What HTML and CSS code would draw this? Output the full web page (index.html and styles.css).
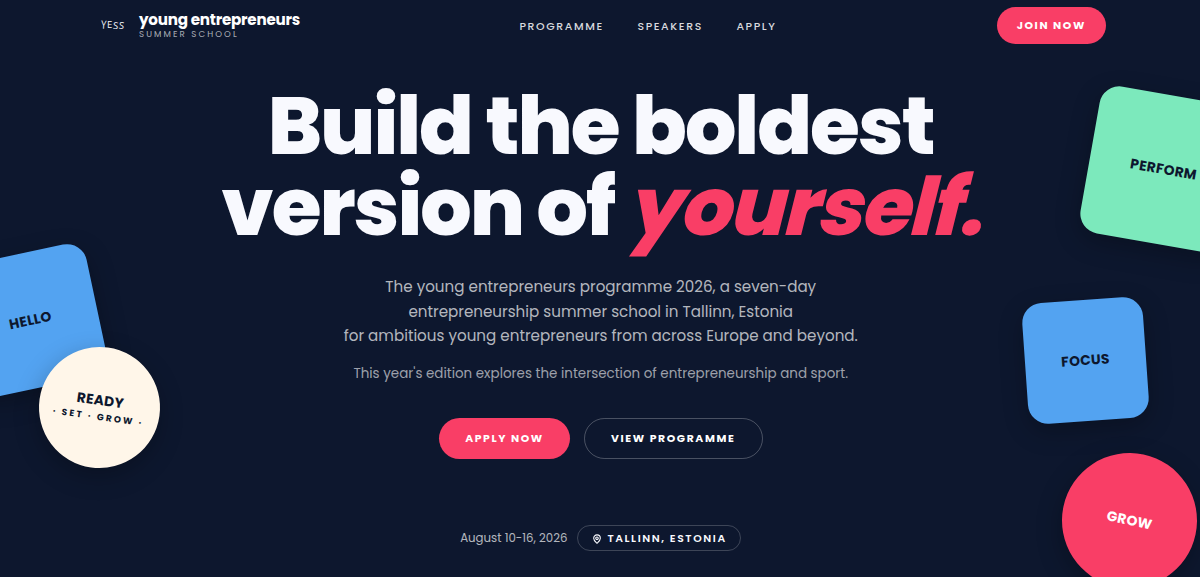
FILE: index.html
```
<!DOCTYPE html>
<html lang="en">
<head>
<meta charset="utf-8">
<title>Young Entrepreneurs Summer School</title>
<link rel="stylesheet" href="styles.css">
</head>
<body>
<header class="header">
  <a class="brand">
    <span class="mark"><i>Y</i><i>E</i><i>S</i><i>S</i></span>
    <span class="brand-text">
      <span class="brand-name">young entrepreneurs</span>
      <span class="brand-sub">SUMMER SCHOOL</span>
    </span>
  </a>
  <nav class="nav"><a>PROGRAMME</a><a>SPEAKERS</a><a>APPLY</a></nav>
  <a class="btn btn-join">JOIN NOW</a>
</header>
<main class="hero">
  <h1 class="title">Build the boldest<br>version of <em>yourself.</em></h1>
  <p class="lead">The young entrepreneurs programme 2026, a seven-day<br>entrepreneurship summer school in Tallinn, Estonia<br>for ambitious young entrepreneurs from across Europe and beyond.</p>
  <p class="note">This year's edition explores the intersection of entrepreneurship and sport.</p>
  <div class="actions">
    <a class="btn btn-primary">APPLY NOW</a>
    <a class="btn btn-outline">VIEW PROGRAMME</a>
  </div>
  <div class="meta">
    <span>August 10-16, 2026</span>
    <span class="place">
      <svg class="pin" viewBox="0 0 24 24" fill="none" stroke="currentColor" stroke-width="2.6" stroke-linecap="round" stroke-linejoin="round"><path d="M20 10c0 5-5.500 10.200-7.400 11.800a1 1 0 0 1-1.200 0C9.500 20.200 4 15 4 10a8 8 0 0 1 16 0"/><circle cx="12" cy="10" r="3"/></svg>
      TALLINN, ESTONIA
    </span>
  </div>
</main>
<div class="sticker hello">HELLO</div>
<div class="sticker ready">READY<small>· SET · GROW ·</small></div>
<div class="sticker perform">PERFORM</div>
<div class="sticker focus">FOCUS</div>
<div class="sticker grow">GROW</div>
</body>
</html>
```
FILE: styles.css
```
* { box-sizing: border-box; }
body {
  margin: 0;
  position: relative;
  height: 577px;
  overflow: hidden;
  background: #0d172e;
  color: #f8f9fe;
  font-family: Poppins, Inter, "Open Sans", sans-serif;
}
.header {
  display: grid;
  grid-template-columns: 418.500px auto 1fr;
  align-items: center;
  height: 50px;
  padding: 0 94px 0 101px;
}
.brand { display: flex; align-items: center; gap: 15px; }
.mark {
  display: flex;
  justify-content: space-between;
  width: 23px;
  font: 500 9.5px/12px "Open Sans", sans-serif;
}
.mark i { font-style: normal; }
.mark i:nth-child(1) { transform: rotate(4deg) scaleY(1.2); }
.mark i:nth-child(3) { transform: translateY(1px) rotate(6deg); }
.mark i:nth-child(4) { transform: translateY(1px) rotate(8deg); }
.brand-text { display: flex; flex-direction: column; padding-top: 1px; }
.brand-name { font-size: 15.15px; line-height: 17px; font-weight: 700; letter-spacing: -0.23px; color: #fff; }
.brand-sub { font-size: 8.6px; line-height: 13px; letter-spacing: 2.1px; color: rgba(255,255,255,.65); }
.nav { display: flex; gap: 33.500px; padding-top: 3px; font-size: 10.94px; font-weight: 500; letter-spacing: 1.6px; color: rgba(255,255,255,.85); }
.btn {
  display: inline-flex;
  align-items: center;
  justify-content: center;
  border-radius: 30px;
  color: #fff;
  font-size: 10.8px;
  font-weight: 700;
  letter-spacing: 1.62px;
  padding-top: 1px;
}
.btn-join { justify-self: end; width: 109.500px; height: 37px; background: #f93e66; }
.hero { display: flex; flex-direction: column; align-items: center; padding: 35px 0 0 1.500px; }
.title {
  margin: 0;
  font-size: 80.8px;
  line-height: 81px;
  font-weight: 800;
  letter-spacing: -2.02px;
  text-align: center;
  white-space: nowrap;
}
/* Slanted upright glyphs, pivoting on the baseline */
.title em {
  display: inline-block;
  font-style: normal;
  color: #f93e66;
  transform: skewX(-14deg);
  transform-origin: 0 69px;
}
.lead { margin: 28px 0 0; font-size: 15.15px; line-height: 24.62px; text-align: center; color: rgba(255,255,255,.7); }
.note { margin: 14px 0 0; font-size: 13.46px; line-height: 22px; color: rgba(255,255,255,.6); }
.actions { display: flex; gap: 13.500px; margin-top: 33px; }
.btn-primary { width: 131.500px; height: 41px; background: #f93e66; }
.btn-outline { width: 179px; height: 41px; border: 1px solid rgba(255,255,255,.25); }
.meta { display: flex; align-items: center; gap: 10px; margin-top: 66.500px; font-size: 11.78px; color: rgba(255,255,255,.7); }
.place {
  display: flex;
  align-items: center;
  gap: 5px;
  width: 164px;
  height: 26px;
  padding: 1px 0 0 14px;
  border: 1px solid rgba(255,255,255,.2);
  border-radius: 13px;
  color: #f8f9fe;
  font-size: 10.8px;
  font-weight: 600;
  letter-spacing: 1.6px;
  white-space: nowrap;
}
.pin { width: 10px; height: 10px; flex: none; }
/* Stickers float freely around the hero copy */
.sticker {
  position: absolute;
  display: flex;
  flex-direction: column;
  align-items: center;
  justify-content: center;
  color: #0d172e;
  font-size: 13.8px;
  line-height: 20px;
  font-weight: 700;
  letter-spacing: .3px;
  box-shadow: 0 8px 24px rgba(0,0,0,.25);
}
.sticker small { font-size: 9px; line-height: 13px; letter-spacing: 2.2px; white-space: nowrap; }
.hello { left: -37.500px; top: 253px; width: 135px; height: 135px; border-radius: 20px; background: #53a3f1; transform: rotate(-12deg); }
.ready { left: 38.500px; top: 347px; width: 121px; height: 121px; border-radius: 50%; background: #fff6e9; transform: rotate(8deg); }
.perform { left: 1089px; top: 95px; width: 149px; height: 149px; border-radius: 20px; background: #7ce9bc; transform: rotate(10deg); }
.focus { left: 1025px; top: 300px; width: 121px; height: 121px; border-radius: 20px; background: #53a3f1; transform: rotate(-4deg); }
.grow { left: 1062px; top: 452.500px; width: 135px; height: 135px; border-radius: 50%; background: #f93e66; color: #fff; transform: rotate(12deg); }
```
